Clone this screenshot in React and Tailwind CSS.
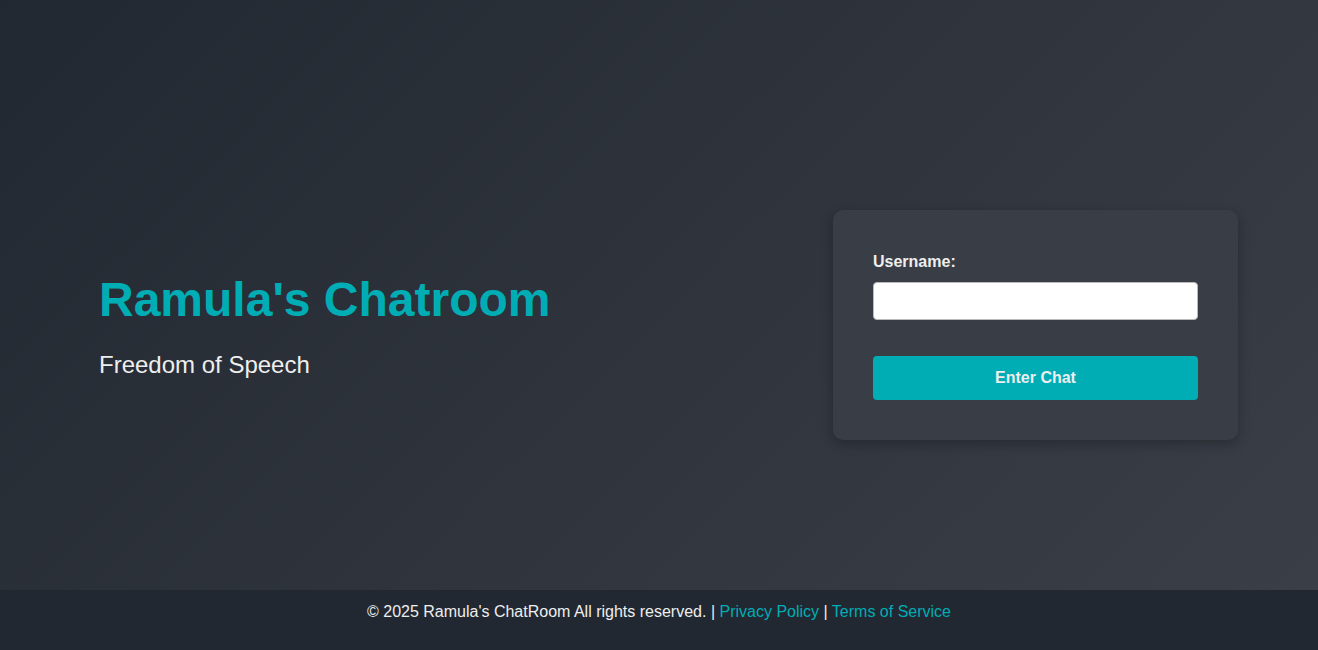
export default function App() {
  return (
    <div className="flex h-screen flex-col bg-linear-135 from-[#222831] to-[#3b3f48] font-['Liberation_Sans',Arial,sans-serif] text-[#eeeeee]">
      <main className="flex h-[590px] items-center justify-between pl-[99px] pr-[80px] pt-[60px]">
        <section>
          <h1 className="text-[48px] font-bold leading-[55px] text-[#00adb5]">Ramula's Chatroom</h1>
          <p className="mt-[24px] text-[24px] leading-[28px]">Freedom of Speech</p>
        </section>
        <form className="w-[405px] rounded-[10px] bg-[#393e46] p-[40px] shadow-[0_4px_12px_rgba(0,0,0,0.25)]">
          <label className="block text-[16px] font-bold leading-6">Username:</label>
          <input
            type="text"
            className="mt-2 block h-[38px] w-full rounded-[4px] border border-[#bbbbbb] bg-white px-[10px] text-[16px] text-[#222831] outline-none"
          />
          <button
            type="button"
            className="mt-[36px] block h-[44px] w-full rounded-[4px] bg-[#00adb5] text-[16px] font-bold text-[#eeeeee]"
          >
            Enter Chat
          </button>
        </form>
      </main>
      <footer className="h-[60px] bg-[#222831] pt-[13px] text-center text-[16px] leading-[normal]">
        © 2025 Ramula's ChatRoom All rights reserved. |{' '}
        <a href="#" className="text-[#00adb5]">Privacy Policy</a> |{' '}
        <a href="#" className="text-[#00adb5]">Terms of Service</a>
      </footer>
    </div>
  );
}
